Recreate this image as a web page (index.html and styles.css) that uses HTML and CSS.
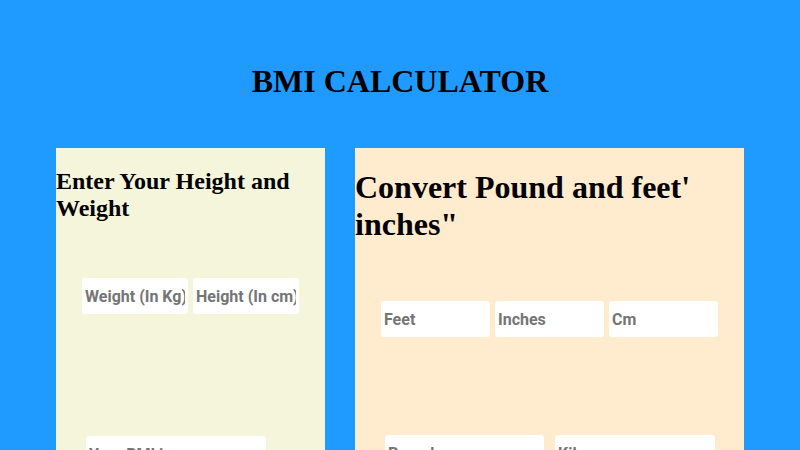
FILE: index.html
```html
<!DOCTYPE html>
<html>
<head>
<meta charset="utf-8">
<link rel="stylesheet" href="styles.css">
</head>
<body>
<h1 class="title">BMI CALCULATOR</h1>
<div class="panels">
  <div class="panel panel-bmi">
    <h2 class="panel-heading">Enter Your Height and Weight</h2>
    <div class="row row-bmi">
      <input class="field field-sm" type="text" placeholder="Weight (In Kg)">
      <input class="field field-sm" type="text" placeholder="Height (In cm)">
    </div>
    <div class="row row-result">
      <input class="field field-result" type="text" placeholder="Your BMI is">
    </div>
  </div>
  <div class="panel panel-convert">
    <h1 class="panel-heading big">Convert Pound and feet' inches"</h1>
    <div class="row row-convert">
      <input class="field field-md" type="text" placeholder="Feet">
      <input class="field field-md" type="text" placeholder="Inches">
      <input class="field field-md" type="text" placeholder="Cm">
    </div>
    <div class="row row-weight">
      <input class="field field-lg" type="text" placeholder="Pound">
      <input class="field field-lg2" type="text" placeholder="Kilogram">
    </div>
  </div>
</div>
</body>
</html>
```
FILE: styles.css
```css
html, body {
  margin: 0;
  padding: 0;
}
body {
  background: #1f9bff;
  font-family: "Liberation Serif", "Times New Roman", serif;
  color: #000;
  overflow: hidden;
  height: 450px;
}
.title {
  margin: 63px 0 0;
  font-size: 32px;
  font-weight: bold;
  text-align: center;
  line-height: normal;
}
.panels {
  display: flex;
  justify-content: center;
  align-items: flex-start;
  gap: 30px;
  margin-top: 48px;
}
.panel {
  height: 400px;
}
.panel-bmi {
  width: 269px;
  background: #f5f5dc;
  padding-top: 20px;
}
.panel-convert {
  width: 389px;
  background: #ffebcd;
  padding-top: 21px;
}
.panel-heading {
  margin: 0;
  font-size: 24px;
  font-weight: bold;
  line-height: normal;
}
.panel-heading.big {
  font-size: 32px;
}
.row {
  display: flex;
}
.row-bmi {
  justify-content: center;
  gap: 5px;
  margin-top: 56px;
}
.row-result {
  margin-top: 122px;
  padding-left: 30px;
}
.row-convert {
  justify-content: center;
  gap: 5px;
  margin-top: 58px;
}
.row-weight {
  margin-top: 98px;
  padding-left: 30px;
  gap: 11px;
}
.field {
  box-sizing: border-box;
  height: 36px;
  border: none;
  border-radius: 3px;
  background: #fff;
  padding: 0 3px;
  font-family: Roboto, "Liberation Sans", sans-serif;
  font-weight: bold;
  font-size: 16px;
  color: #333;
  outline: none;
}
.field::placeholder {
  color: #757575;
  opacity: 1;
}
.field-sm { width: 106px; }
.field-md { width: 109px; }
.field-result { width: 180px; }
.field-lg { width: 159px; }
.field-lg2 { width: 160px; }
```
